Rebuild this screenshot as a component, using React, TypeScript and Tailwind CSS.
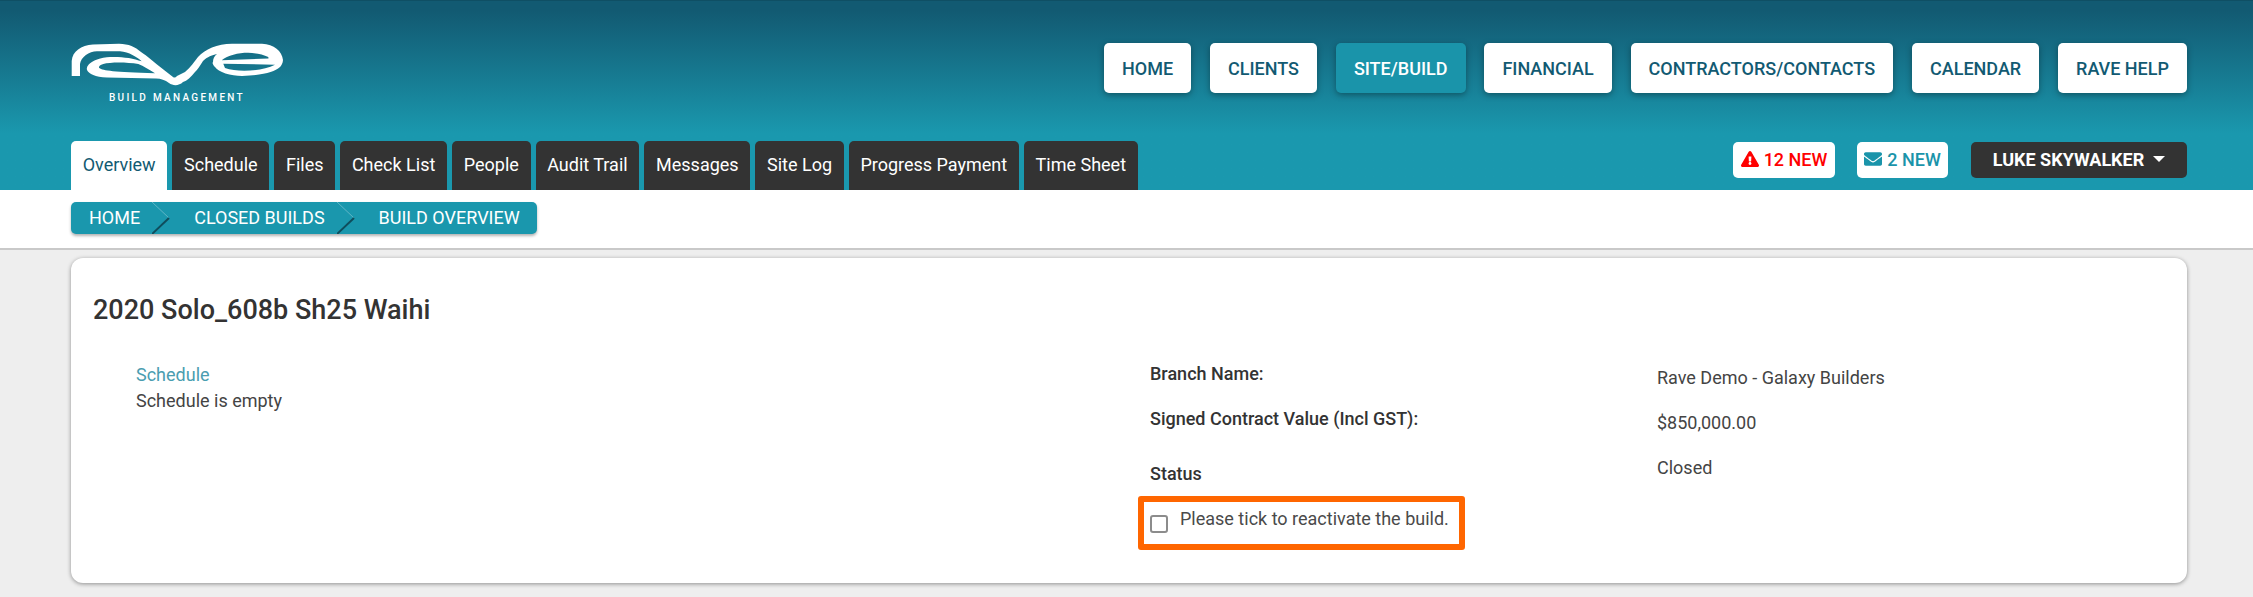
import React from "react";
import { FaExclamationTriangle, FaEnvelope } from "react-icons/fa";

const navItems = ["HOME", "CLIENTS", "SITE/BUILD", "FINANCIAL", "CONTRACTORS/CONTACTS", "CALENDAR", "RAVE HELP"];
const tabs = ["Overview", "Schedule", "Files", "Check List", "People", "Audit Trail", "Messages", "Site Log", "Progress Payment", "Time Sheet"];
const crumbs = ["HOME", "CLOSED BUILDS", "BUILD OVERVIEW"];

function Logo() {
  return (
    <div className="flex flex-col items-center w-[212px]">
      <svg width="212" height="44" viewBox="0 0 212 44" className="block">
        <path
          fillRule="evenodd"
          fill="#fff"
          d="M0.7 33 L0.7 18 C1.5 8 10 2.5 22 1.5 L48 0.8 C58 1 64 4 70 9 C75 12 85 21 102 34 Q104 35.5 106 33 L114 29 C120 24 123 19 127 14 C134 6 146 1 161 0.7 L191 0.7 C203 1 211 8 212 17 C212 20 210 23 209 24 C203 29 194 32 171 33 C160 33 147 29 144 24 C142 22 141 20 142 19 C142 16 143 13 146 11 C138 13 135 15 132 18 C129 23 126 27 124 29 C120 34 116 38 112 39 C108 43 102 43 98 40 C94 37 90 35.7 85 35.5 L36 34.5 C24 34 18 31 16 27 C15 24 18 20 24 17.3 C30 15 35 14 39 14 C50 13.5 62 15 70.7 18.3 C66 14 58 9 49 8.3 L26 8.3 C18 8.5 10 14 9 21 L9 33 Z
             M67.3 21 C55.7 19 39 19 32.3 21 C28.3 22.3 27.3 24 28.3 25 C32.3 27.7 42.3 29 84 30.3 C79 27.3 72.3 23 67.3 21 Z
             M150.7 17.3 C161 9 184 7.3 197.3 14 L197.5 15.5 Z
             M152.3 20.7 L204 21.7 C190.7 28.3 167 29.7 154 25 Z"
        />
      </svg>
      <span className="mt-[6px] text-[10px] leading-[10px] tracking-[2.3px] text-white font-medium">BUILD MANAGEMENT</span>
    </div>
  );
}

function Chevron() {
  return (
    <svg width="18" height="32" viewBox="0 0 18 32" className="absolute top-0 right-0">
      <path d="M0 0 L17 16" stroke="#5fb5c6" strokeWidth="1" fill="none" />
      <path d="M17 16 L0 32" stroke="#0f4d5c" strokeWidth="2" fill="none" />
    </svg>
  );
}

export default function App() {
  return (
    <div className="min-h-[597px] bg-[#eeeeee] font-['Roboto',sans-serif] text-[#333333]">
      <header className="h-[190px] flex flex-col pl-[71px] pr-[66px] bg-linear-to-b from-[#125a72] from-5% to-[#1a98ae] to-70% border-t border-[#0f4f64]">
        <div className="flex justify-between items-start pt-[42px]">
          <Logo />
          <nav className="flex gap-[18.9px]">
            {navItems.map((n) => (
              <a
                key={n}
                className={
                  n === "SITE/BUILD"
                    ? "h-[50px] px-[18px] flex items-center rounded-[5px] bg-[#1a94aa] text-white text-[18px] font-medium shadow-[0_2px_6px_rgba(0,0,0,0.35)]"
                    : "h-[50px] px-[18px] flex items-center rounded-[5px] bg-white text-[#125a72] text-[18px] font-medium shadow-[0_2px_6px_rgba(0,0,0,0.35)]"
                }
              >
                {n}
              </a>
            ))}
          </nav>
        </div>
        <div className="mt-auto flex justify-between items-start">
          <div className="flex gap-[5px]">
            {tabs.map((t) => (
              <a
                key={t}
                className={
                  t === "Overview"
                    ? "h-[49px] px-[11.7px] pb-[2px] flex items-center rounded-t-[5px] bg-white text-[#125a72] text-[18px]"
                    : "h-[49px] px-[11.7px] pb-[2px] flex items-center rounded-t-[5px] bg-[#333333] text-white text-[18px]"
                }
              >
                {t}
              </a>
            ))}
          </div>
          <div className="flex items-center mt-[1px]">
            <span className="h-[36px] w-[102px] pb-[2px] flex items-center justify-center gap-[5px] rounded-[5px] bg-white text-[#ff0000] text-[18px] font-medium">
              <FaExclamationTriangle size={18} />
              12 NEW
            </span>
            <span className="ml-[22px] h-[36px] w-[91px] pb-[2px] flex items-center justify-center gap-[5px] rounded-[5px] bg-white text-[#1a94aa] text-[18px] font-medium">
              <FaEnvelope size={18} />
              2 NEW
            </span>
            <span className="ml-[23px] h-[36px] w-[216px] pb-[2px] flex items-center justify-center gap-[9px] rounded-[5px] bg-[#333333] text-white text-[18px] font-bold">
              LUKE SKYWALKER
              <span className="border-x-[6px] border-t-[6px] border-x-transparent border-t-white" />
            </span>
          </div>
        </div>
      </header>

      <div className="h-[60px] bg-white border-b-2 border-[#c9c9c9] pl-[71px] pt-[12px]">
        <ol className="inline-flex h-[32px] items-center rounded-[5px] bg-[#1a97ad] text-white text-[18px] shadow-[0_2px_3px_rgba(0,0,0,0.3)]">
          {crumbs.map((c, i) => (
            <li
              key={c}
              className={
                i === 0
                  ? "relative h-full flex items-center pb-[2px] pl-[18px] pr-[30px]"
                  : i === 1
                    ? "relative h-full flex items-center pb-[2px] pl-[24px] pr-[30px]"
                    : "relative h-full flex items-center pb-[2px] pl-[24px] pr-[17px]"
              }
            >
              {c}
              {i < 2 && <Chevron />}
            </li>
          ))}
        </ol>
      </div>

      <main className="ml-[71px] mr-[66px] mt-[8px] h-[325px] rounded-[12px] bg-white shadow-[0_1px_4px_rgba(0,0,0,0.4)] px-[22px] pt-[36px]">
        <h1 className="text-[27px] leading-[32px] font-medium text-[#333333]">2020 Solo_608b Sh25 Waihi</h1>
        <div className="flex mt-[36px]">
          <div className="w-[1057px] pl-[43px] text-[18px] leading-[26px]">
            <a className="block text-[#4a9db0]">Schedule</a>
            <p className="text-[#444444]">Schedule is empty</p>
          </div>
          <div className="flex-1 text-[18px] leading-[24px]">
            <div className="grid grid-cols-[507px_1fr]">
              <div className="h-[45px] font-medium">Branch Name:</div>
              <div className="pt-[4px] text-[#444444]">Rave Demo - Galaxy Builders</div>
              <div className="h-[48px] font-medium">Signed Contract Value (Incl GST):</div>
              <div className="pt-[4px] text-[#444444]">$850,000.00</div>
              <div className="pt-[7px] font-medium">Status</div>
              <div className="pt-[1px] text-[#444444]">Closed</div>
            </div>
            <label className="mt-[10px] -ml-[12px] w-[327px] h-[54px] flex items-center border-[6px] border-[#ff6600] rounded-[3px] pl-[6px] text-[#4a4a4a]">
              <input
                type="checkbox"
                className="appearance-none w-[18px] h-[18px] mt-[2px] border-2 border-[#8c8c8c] rounded-[3px] bg-white"
              />
              <span className="ml-[12px] -mt-[8px]">Please tick to reactivate the build.</span>
            </label>
          </div>
        </div>
      </main>
    </div>
  );
}
